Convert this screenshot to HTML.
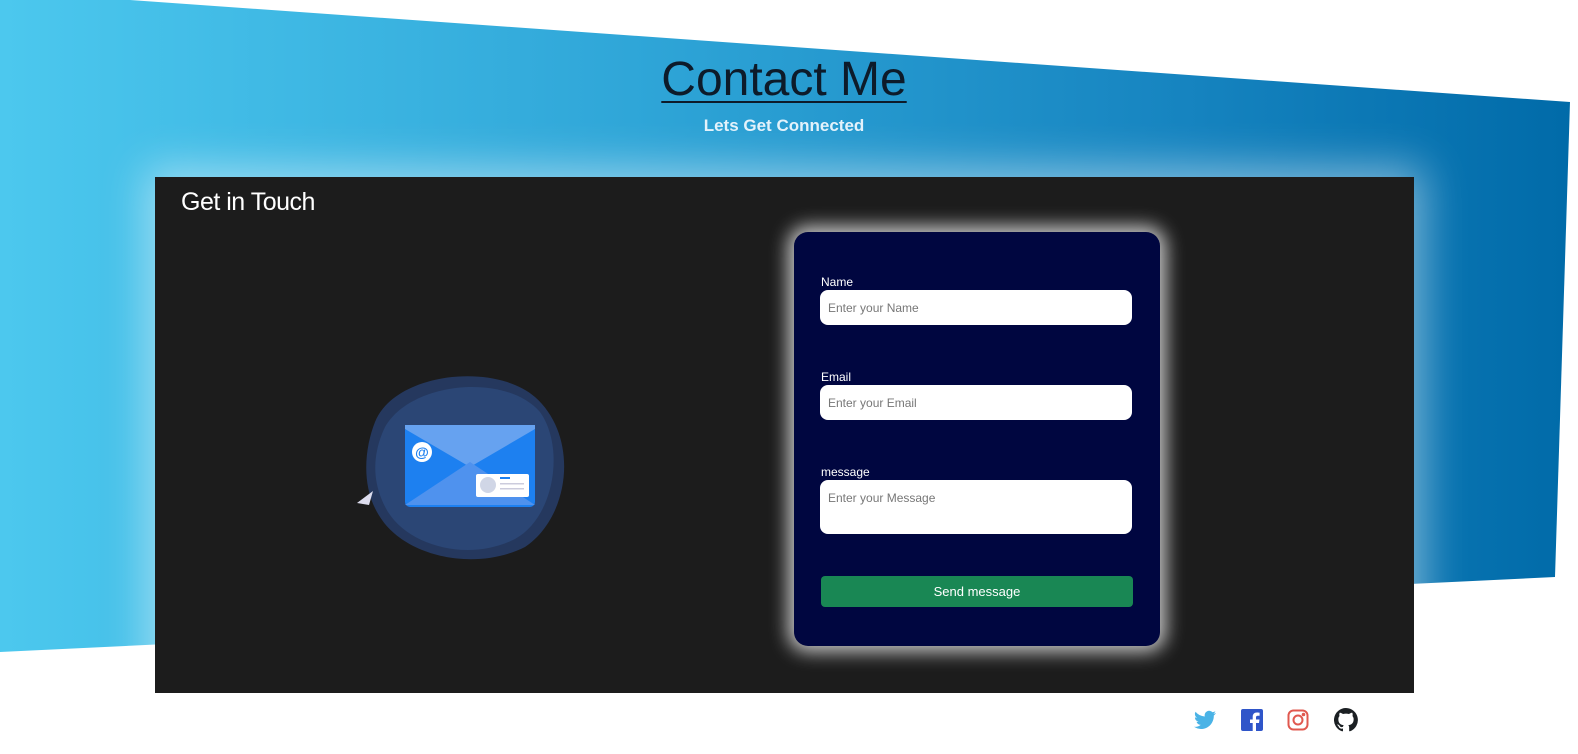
<!DOCTYPE html>
<html><head><style>
*{margin:0;padding:0;box-sizing:border-box}
body{width:1578px;height:754px;background:#fff;position:relative;overflow:hidden;font-family:"Liberation Sans",sans-serif}
.bg{position:absolute;left:0;top:0;width:1578px;height:754px;background:linear-gradient(90deg,#4cc8ee 0%,#2fa6d8 40%,#1684c0 75%,#006aa8 100%);clip-path:polygon(0 0,130px 0,1570px 102px,1555px 577px,0 652px)}
h1{position:absolute;left:0;width:1568px;top:52px;text-align:center;font-weight:normal;font-size:48px;color:#0d1b2a;text-decoration:underline;text-decoration-thickness:2px;text-underline-offset:6px}
.sub{position:absolute;left:0;width:1568px;top:116px;text-align:center;color:#e3f2fb;font-size:17px;font-weight:bold}
.card{position:absolute;left:155px;top:177px;width:1259px;height:516px;background:#1c1c1c;box-shadow:0 0 40px 10px rgba(255,255,255,.45)}
.card h2{position:absolute;left:26px;top:11px;color:#fff;font-size:25px;font-weight:normal;letter-spacing:-.5px}
.form{position:absolute;left:639px;top:55px;width:366px;height:414px;background:#000640;border-radius:14px;box-shadow:0 0 18px 6px rgba(255,255,255,.75)}
.lbl{position:absolute;left:27px;color:#fff;font-size:12px}
.in{position:absolute;left:26px;width:312px;height:35px;background:#fff;border-radius:8px;color:#777;font-size:12px;padding:11px 8px}
.btn{position:absolute;left:27px;top:344px;width:312px;height:31px;background:#198754;border-radius:4px;color:#fff;font-size:13px;text-align:center;line-height:31px}
.icons{position:absolute;top:708px;left:1192px}
</style></head><body>
<div class="bg"></div>
<h1>Contact Me</h1>
<div class="sub">Lets Get Connected</div>
<div class="card">
<h2>Get in Touch</h2>
<svg style="position:absolute;left:200px;top:190px" width="230" height="200" viewBox="0 0 230 200">
<path d="M20 55 C40 5 140 -5 180 30 C225 70 215 150 170 180 C120 205 50 190 25 150 C5 120 10 80 20 55Z" fill="#25385e"/>
<path d="M30 60 C55 15 150 5 185 45 C210 80 200 150 160 172 C115 195 55 180 33 145 C15 115 18 85 30 60Z" fill="#2b4675"/>
<rect x="50" y="58" width="130" height="82" rx="5" fill="#1d80f0"/>
<path d="M50 62 L115 100 L180 62 L180 58 L50 58Z" fill="#66a2f0"/>
<path d="M50 138 L115 95 L180 138Z" fill="#4f92ee"/>
<circle cx="67" cy="85" r="10" fill="#fff"/><text x="67" y="90" font-size="14" text-anchor="middle" fill="#1d80f0" font-weight="bold">@</text>
<rect x="121" y="107" width="53" height="23" rx="2" fill="#fff"/><circle cx="133" cy="118" r="8" fill="#d0d6e6"/>
<rect x="145" y="110" width="10" height="2" fill="#1d80f0"/><rect x="145" y="116" width="24" height="1.5" fill="#ccd"/><rect x="145" y="121" width="24" height="1.5" fill="#ccd"/>
<path d="M2 136 L18 124 L14 138Z" fill="#dde"/>
</svg>
<div class="form">
<div class="lbl" style="top:43px">Name</div><div class="in" style="top:58px">Enter your Name</div>
<div class="lbl" style="top:138px">Email</div><div class="in" style="top:153px">Enter your Email</div>
<div class="lbl" style="top:233px">message</div><div class="in" style="top:248px;height:54px">Enter your Message</div>
<div class="btn">Send message</div>
</div>
</div>
<div class="icons">
<svg style="position:absolute;left:0;top:0" width="26" height="24" viewBox="0 0 24 24"><path fill="#4ab3e6" d="M23 5c-.8.4-1.7.6-2.6.7a4.5 4.5 0 0 0 2-2.5c-.9.5-1.9.9-2.9 1.1A4.5 4.5 0 0 0 11.8 8.5 12.8 12.8 0 0 1 2.5 3.8a4.5 4.5 0 0 0 1.4 6 4.5 4.5 0 0 1-2-.6 4.5 4.5 0 0 0 3.6 4.5 4.5 4.5 0 0 1-2 .1 4.5 4.5 0 0 0 4.2 3.1A9 9 0 0 1 1 18.8 12.8 12.8 0 0 0 7.9 21c8.3 0 12.9-6.9 12.9-12.9v-.6c.9-.6 1.6-1.4 2.2-2.5z"/></svg>
<svg style="position:absolute;left:49px;top:1px" width="22" height="22" viewBox="0 0 22 22"><rect width="22" height="22" rx="2" fill="#2f55c9"/><path d="M15 22v-8h3l.5-3.5H15V8.5c0-1 .4-1.7 1.8-1.7h1.8V3.7c-.4 0-1.4-.2-2.7-.2-2.6 0-4.2 1.5-4.2 4.3v2.7H9V14h2.7v8z" fill="#fff"/></svg>
<svg style="position:absolute;left:95px;top:1px" width="22" height="22" viewBox="0 0 22 22" fill="none" stroke="#e0584f" stroke-width="2"><rect x="1.5" y="1.5" width="19" height="19" rx="5"/><circle cx="11" cy="11" r="4.5"/><circle cx="16.5" cy="5.5" r=".8" fill="#e0584f"/></svg>
<svg style="position:absolute;left:142px;top:0" width="24" height="24" viewBox="0 0 16 16"><path fill="#1b1f23" d="M8 0a8 8 0 0 0-2.5 15.6c.4 0 .5-.2.5-.4v-1.5c-2.2.5-2.7-1-2.7-1-.4-.9-.9-1.2-.9-1.2-.7-.5.1-.5.1-.5.8.1 1.2.8 1.2.8.7 1.3 1.9.9 2.3.7.1-.5.3-.9.5-1.1-1.8-.2-3.6-.9-3.6-4 0-.9.3-1.6.8-2.1-.1-.2-.4-1 .1-2.1 0 0 .7-.2 2.2.8a7.5 7.5 0 0 1 4 0c1.5-1 2.2-.8 2.2-.8.4 1.1.2 1.9.1 2.1.5.6.8 1.3.8 2.1 0 3.1-1.9 3.8-3.6 4 .3.3.6.8.6 1.5v2.2c0 .2.1.5.6.4A8 8 0 0 0 8 0z"/></svg>
</div>
</body></html>
